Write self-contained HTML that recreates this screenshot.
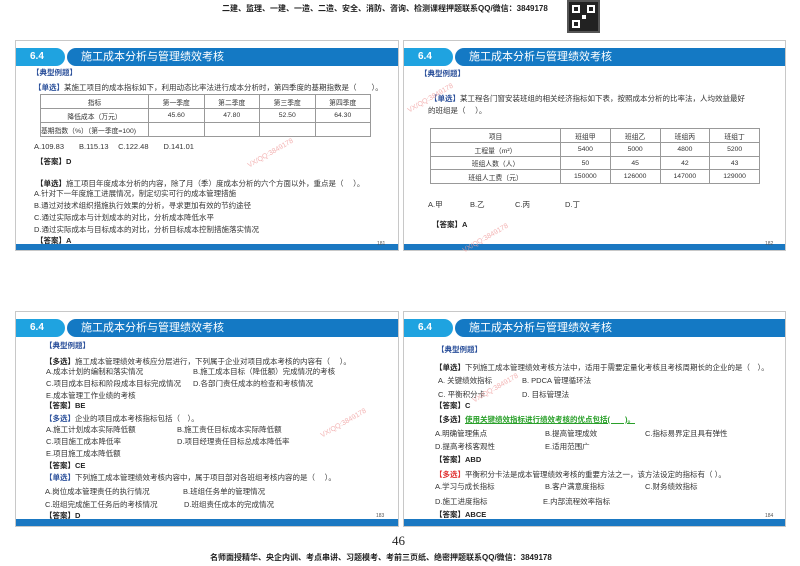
<!DOCTYPE html>
<html><head><meta charset="utf-8"><style>
*{margin:0;padding:0;box-sizing:border-box}
body{width:800px;height:566px;background:#fff;position:relative;overflow:hidden;font-family:"Liberation Sans","Noto Sans CJK SC",sans-serif;color:#333}
.s{position:absolute;border:1px solid #c8c8c8;background:#fff}
.bb{position:absolute;left:0;right:0;bottom:0;height:6px;background:#1a78c2}
.tab{position:absolute;left:0;top:7px;width:49px;height:18px;background:#1fa3e0;border-radius:0 9px 9px 0;color:#fff;font-weight:bold;font-size:10px;line-height:18px;padding-left:14px}
.bar{position:absolute;left:51px;right:0;top:7px;height:18px;background:#1479c4;border-radius:9px 0 0 9px;color:#fff;font-size:11px;line-height:18px;padding-left:14px}
.t{position:absolute;font-size:7.5px;white-space:nowrap;line-height:9px}
.b{color:#2a4f9a;font-weight:bold}
.k{font-weight:bold;color:#222}
.pn{position:absolute;font-size:5px;color:#555}
table{position:absolute;border-collapse:collapse;font-size:6.8px}
td{border:1px solid #999;text-align:center;padding:0;color:#333}
.wm{position:absolute;color:#f0a0a0;font-size:7px;transform:rotate(-30deg);white-space:nowrap;opacity:.8}
</style></head><body>
<div class="t k" style="left:222px;top:4px;font-size:8px">二建、监理、一建、一造、二造、安全、消防、咨询、检测课程押题联系QQ/微信：3849178</div>
<div style="position:absolute;left:567px;top:0;width:33px;height:33px;background:#222;border:2px solid #555">
<div style="position:absolute;left:3px;top:3px;width:8px;height:8px;border:2px solid #fff"></div>
<div style="position:absolute;right:3px;top:3px;width:8px;height:8px;border:2px solid #fff"></div>
<div style="position:absolute;left:3px;bottom:3px;width:8px;height:8px;border:2px solid #fff"></div>
<div style="position:absolute;left:13px;top:13px;width:4px;height:4px;background:#fff"></div></div>

<!-- slide 1 -->
<div class="s" style="left:15px;top:40px;width:384px;height:211px">
<div class="tab">6.4</div><div class="bar">施工成本分析与管理绩效考核</div><div class="bb"></div></div>
<div class="t b" style="left:32px;top:68px">【典型例题】</div>
<div class="t" style="left:34px;top:83px"><span class="b">【单选】</span>某施工项目的成本指标如下，利用动态比率法进行成本分析时，第四季度的基期指数是（　　）。</div>
<div></div>
<table style="left:40px;top:94px;width:331px">
<tr style="height:14px"><td style="width:108px">指标</td><td>第一季度</td><td>第二季度</td><td>第三季度</td><td>第四季度</td></tr>
<tr style="height:14px"><td>降低成本（万元）</td><td>45.60</td><td>47.80</td><td>52.50</td><td>64.30</td></tr>
<tr style="height:14px"><td style="text-align:left">基期指数（%）（第一季度=100)</td><td></td><td></td><td></td><td></td></tr></table>
<div class="t" style="left:34px;top:142px">A.109.83　　B.115.13　 C.122.48　　D.141.01</div>
<div class="t k" style="left:36px;top:157px">【答案】D</div>
<div class="t" style="left:36px;top:179px"><span class="k">【单选】</span>施工项目年度成本分析的内容，除了月（季）度成本分析的六个方面以外，重点是（　 ）。</div>
<div class="t" style="left:34px;top:189px">A.针对下一年度施工进展情况，制定切实可行的成本管理措施</div>
<div class="t" style="left:34px;top:201px">B.通过对技术组织措施执行效果的分析，寻求更加有效的节约途径</div>
<div class="t" style="left:34px;top:213px">C.通过实际成本与计划成本的对比，分析成本降低水平</div>
<div class="t" style="left:34px;top:225px">D.通过实际成本与目标成本的对比，分析目标成本控制措施落实情况</div>
<div class="t k" style="left:36px;top:236px">【答案】A</div>
<div class="pn" style="left:377px;top:241px">181</div>
<div class="wm" style="left:245px;top:150px">VX/QQ:3849178</div>

<!-- slide 2 -->
<div class="s" style="left:403px;top:40px;width:383px;height:211px">
<div class="tab">6.4</div><div class="bar">施工成本分析与管理绩效考核</div><div class="bb"></div></div>
<div class="t b" style="left:420px;top:69px">【典型例题】</div>
<div class="t" style="left:430px;top:94px"><span class="b">【单选】</span>某工程各门窗安装班组的相关经济指标如下表，按照成本分析的比率法，人均效益最好</div>
<div class="t" style="left:428px;top:106px">的班组是（　 ）。</div>
<table style="left:430px;top:128px;width:330px">
<tr style="height:14px"><td style="width:130px">项目</td><td>班组甲</td><td>班组乙</td><td>班组丙</td><td>班组丁</td></tr>
<tr style="height:14px"><td>工程量（m²）</td><td>5400</td><td>5000</td><td>4800</td><td>5200</td></tr>
<tr style="height:13px"><td>班组人数（人）</td><td>50</td><td>45</td><td>42</td><td>43</td></tr>
<tr style="height:14px"><td>班组人工费（元）</td><td>150000</td><td>126000</td><td>147000</td><td>129000</td></tr></table>
<div class="t" style="left:428px;top:200px">A.甲</div><div class="t" style="left:470px;top:200px">B.乙</div><div class="t" style="left:515px;top:200px">C.丙</div><div class="t" style="left:565px;top:200px">D.丁</div>
<div class="t k" style="left:432px;top:220px">【答案】A</div>
<div class="pn" style="left:765px;top:241px">182</div>
<div class="wm" style="left:405px;top:95px">VX/QQ:3849178</div>
<div class="wm" style="left:460px;top:235px">VX/QQ:3849178</div>

<!-- slide 3 -->
<div class="s" style="left:15px;top:311px;width:384px;height:216px">
<div class="tab" style="top:7px">6.4</div><div class="bar">施工成本分析与管理绩效考核</div><div class="bb" style="height:7px"></div></div>
<div class="t b" style="left:45px;top:341px">【典型例题】</div>
<div class="t" style="left:45px;top:357px"><span class="k">【多选】</span>施工成本管理绩效考核应分层进行，下列属于企业对项目成本考核的内容有（　 ）。</div>
<div class="t" style="left:46px;top:367px">A.成本计划的编制和落实情况</div><div class="t" style="left:193px;top:367px">B.施工成本目标（降低额）完成情况的考核</div>
<div class="t" style="left:46px;top:379px">C.项目成本目标和阶段成本目标完成情况</div><div class="t" style="left:193px;top:379px">D.各部门责任成本的检查和考核情况</div>
<div class="t" style="left:46px;top:391px">E.成本管理工作业绩的考核</div>
<div class="t k" style="left:45px;top:401px">【答案】BE</div>
<div class="t" style="left:45px;top:414px"><span class="b">【多选】</span>企业的项目成本考核指标包括（　）。</div>
<div class="t" style="left:46px;top:425px">A.施工计划成本实际降低额</div><div class="t" style="left:177px;top:425px">B.施工责任目标成本实际降低额</div>
<div class="t" style="left:46px;top:437px">C.项目施工成本降低率</div><div class="t" style="left:177px;top:437px">D.项目经理责任目标总成本降低率</div>
<div class="t" style="left:46px;top:449px">E.项目施工成本降低额</div>
<div class="t k" style="left:45px;top:461px">【答案】CE</div>
<div class="t" style="left:45px;top:473px"><span class="b">【单选】</span>下列施工成本管理绩效考核内容中，属于项目部对各班组考核内容的是（　 ）。</div>
<div class="t" style="left:45px;top:487px">A.岗位成本管理责任的执行情况</div><div class="t" style="left:183px;top:487px">B.班组任务单的管理情况</div>
<div class="t" style="left:45px;top:500px">C.班组完成施工任务后的考核情况</div><div class="t" style="left:184px;top:500px">D.班组责任成本的完成情况</div>
<div class="t k" style="left:45px;top:511px">【答案】D</div>
<div class="pn" style="left:376px;top:513px">183</div>
<div class="wm" style="left:318px;top:420px">VX/QQ:3849178</div>

<!-- slide 4 -->
<div class="s" style="left:403px;top:311px;width:383px;height:216px">
<div class="tab">6.4</div><div class="bar">施工成本分析与管理绩效考核</div><div class="bb" style="height:7px"></div></div>
<div class="t b" style="left:437px;top:345px">【典型例题】</div>
<div class="t" style="left:435px;top:363px"><span class="k">【单选】</span>下列施工成本管理绩效考核方法中，适用于需要定量化考核且考核周期长的企业的是（　）。</div>
<div class="t" style="left:438px;top:376px">A. 关键绩效指标</div><div class="t" style="left:522px;top:376px">B. PDCA 管理循环法</div>
<div class="t" style="left:438px;top:390px">C. 平衡积分卡</div><div class="t" style="left:522px;top:390px">D. 目标管理法</div>
<div class="t k" style="left:435px;top:401px">【答案】C</div>
<div class="t" style="left:435px;top:415px"><span class="k">【多选】</span><span style="color:#2aa02a;font-weight:bold;text-decoration:underline">使用关键绩效指标进行绩效考核的优点包括(　　)。</span></div>
<div class="t" style="left:435px;top:429px">A.明确管理焦点</div><div class="t" style="left:545px;top:429px">B.提高管理成效</div><div class="t" style="left:645px;top:429px">C.指标易界定且具有弹性</div>
<div class="t" style="left:435px;top:442px">D.提高考核客观性</div><div class="t" style="left:545px;top:442px">E.适用范围广</div>
<div class="t k" style="left:435px;top:455px">【答案】ABD</div>
<div class="t" style="left:435px;top:470px"><span style="color:#e03030;font-weight:bold">【多选】</span>平衡积分卡法是成本管理绩效考核的重要方法之一，该方法设定的指标有（ ）。</div>
<div class="t" style="left:435px;top:482px">A.学习与成长指标</div><div class="t" style="left:545px;top:482px">B.客户满意度指标</div><div class="t" style="left:645px;top:482px">C.财务绩效指标</div>
<div class="t" style="left:435px;top:497px">D.施工进度指标</div><div class="t" style="left:543px;top:497px">E.内部流程效率指标</div>
<div class="t k" style="left:435px;top:510px">【答案】ABCE</div>
<div class="pn" style="left:765px;top:513px">184</div>
<div class="wm" style="left:470px;top:385px">VX/QQ:3849178</div>

<div class="t" style="left:392px;top:533px;font-size:13px;line-height:15px;font-family:'Liberation Serif',serif;color:#222">46</div>
<div class="t k" style="left:210px;top:553px;font-size:8px">名师面授精华、央企内训、考点串讲、习题模考、考前三页纸、绝密押题联系QQ/微信：3849178</div>
</body></html>
